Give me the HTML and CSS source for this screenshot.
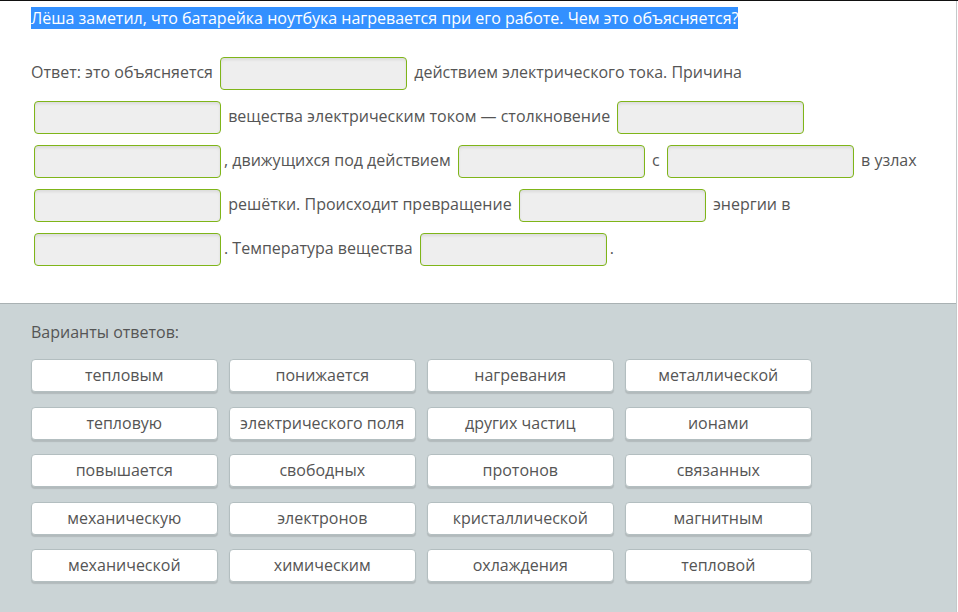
FILE: index.html
```html
<!DOCTYPE html>
<html lang="ru">

<head>
    <meta charset="UTF-8">
    <meta name="viewport" content="width=device-width, initial-scale=1.0">
    <title>Задание</title>
    <link rel="stylesheet" href="styles.css">
</head>

<body>
    <div class="task">
        <div class="task-body">
            <p class="question"><span class="selected">Лёша заметил, что батарейка ноутбука нагревается при его работе. Чем это объясняется?</span></p>
            <p class="answer">Ответ: это объясняется <span class="gap"></span> действием электрического тока. Причина <span class="gap"></span> вещества электрическим током — столкновение <span class="gap"></span> <span class="gap"></span>, движущихся под действием <span class="gap"></span> с <span class="gap"></span> в узлах <span class="gap"></span> решётки. Происходит превращение <span class="gap"></span> энергии в <span class="gap"></span>. Температура вещества <span class="gap"></span>.</p>
        </div>

        <div class="variants">
            <div class="variants-title">Варианты ответов:</div>
            <div class="variants-grid">
                <div class="variant">тепловым</div>
                <div class="variant">понижается</div>
                <div class="variant">нагревания</div>
                <div class="variant">металлической</div>
                <div class="variant">тепловую</div>
                <div class="variant">электрического поля</div>
                <div class="variant">других частиц</div>
                <div class="variant">ионами</div>
                <div class="variant">повышается</div>
                <div class="variant">свободных</div>
                <div class="variant">протонов</div>
                <div class="variant">связанных</div>
                <div class="variant">механическую</div>
                <div class="variant">электронов</div>
                <div class="variant">кристаллической</div>
                <div class="variant">магнитным</div>
                <div class="variant">механической</div>
                <div class="variant">химическим</div>
                <div class="variant">охлаждения</div>
                <div class="variant">тепловой</div>
            </div>
        </div>
    </div>
</body>

</html>
```

FILE: styles.css
```css
html,
body {
    height: 100%;
}

body {
    font-family: "Open Sans", "Liberation Sans", sans-serif;
    font-size: 16px;
    color: #555;
    margin: 0;
    padding: 0;
    background-color: #fff;
    border-top: 1px solid #111;
    box-sizing: border-box;
}

.task {
    width: 957px;
    height: 100%;
    display: flex;
    flex-direction: column;
    border-right: 1px solid #c4c9ca;
    box-sizing: border-box;
}

.task-body {
    padding: 6px 31px 33px 31px;
}

.question {
    margin: 0;
    line-height: 22px;
}

.selected {
    background-color: #3390ff;
    color: white;
}

.answer {
    margin: 21px 0 0 0;
    line-height: 44px;
}

.gap {
    display: inline-block;
    width: 187px;
    height: 33px;
    margin: 0 3px;
    vertical-align: middle;
    background-color: #eee;
    border: 1px solid #7fb519;
    border-radius: 4px;
    box-shadow: inset 0 2px 3px rgba(0, 0, 0, 0.08);
    box-sizing: border-box;
}

.variants {
    flex: 1;
    background-color: #cbd4d6;
    border-top: 1px solid #a9b1b3;
    padding: 17px 31px 0 31px;
}

.variants-title {
    line-height: 22px;
    margin-bottom: 16px;
}

.variants-grid {
    display: grid;
    grid-template-columns: repeat(4, 186.5px);
    column-gap: 11.5px;
    row-gap: 14.5px;
}

.variant {
    height: 33px;
    line-height: 31px;
    text-align: center;
    background: white;
    border: 1px solid #b3bec0;
    border-radius: 4px;
    box-shadow: 0 2px 1px rgba(0, 0, 0, 0.12);
    box-sizing: border-box;
    white-space: nowrap;
}
```
